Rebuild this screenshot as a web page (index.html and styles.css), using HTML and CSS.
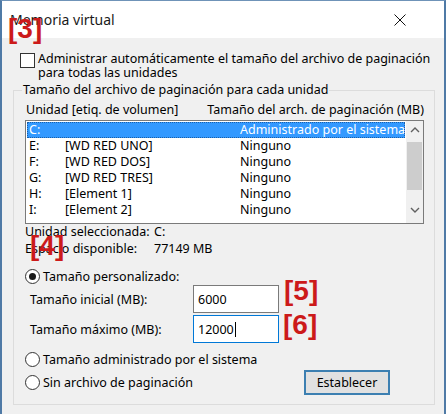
FILE: index.html
```html
<!DOCTYPE html>
<html lang="es">
    <head>
        <meta charset="UTF-8" />
        <title>Memoria virtual</title>
        <link rel="stylesheet" href="styles.css">
    </head>
    <body>
        <div class="window">
            <div class="titlebar">
                <span class="title">Memoria virtual</span>
                <svg class="close" width="12" height="12" viewBox="0 0 12 12">
                    <path d="M0.5 0.5 L11.5 11.5 M11.5 0.5 L0.5 11.5" stroke="#111" stroke-width="1" fill="none" />
                </svg>
            </div>

            <div class="content">
                <div class="check-row">
                    <span class="checkbox"></span>
                    <span class="check-text">Administrar automáticamente el tamaño del archivo de paginación<br>para todas las unidades</span>
                </div>

                <div class="group">
                    <div class="group-label">Tamaño del archivo de paginación para cada unidad</div>

                    <div class="list-head">
                        <span>Unidad [etiq. de volumen]</span>
                        <span>Tamaño del arch. de paginación (MB)</span>
                    </div>

                    <div class="listbox">
                        <div class="rows">
                            <div class="row selected">
                                <span class="col-drive">C:</span>
                                <span class="col-label"></span>
                                <span class="col-size">Administrado por el sistema</span>
                            </div>
                            <div class="row">
                                <span class="col-drive">E:</span>
                                <span class="col-label">[WD RED UNO]</span>
                                <span class="col-size">Ninguno</span>
                            </div>
                            <div class="row">
                                <span class="col-drive">F:</span>
                                <span class="col-label">[WD RED DOS]</span>
                                <span class="col-size">Ninguno</span>
                            </div>
                            <div class="row">
                                <span class="col-drive">G:</span>
                                <span class="col-label">[WD RED TRES]</span>
                                <span class="col-size">Ninguno</span>
                            </div>
                            <div class="row">
                                <span class="col-drive">H:</span>
                                <span class="col-label">[Element 1]</span>
                                <span class="col-size">Ninguno</span>
                            </div>
                            <div class="row">
                                <span class="col-drive">I:</span>
                                <span class="col-label">[Element 2]</span>
                                <span class="col-size">Ninguno</span>
                            </div>
                        </div>
                        <div class="scrollbar">
                            <svg class="arrow" width="10" height="6" viewBox="0 0 10 6">
                                <path d="M1 5 L5 1 L9 5" stroke="#606060" stroke-width="1.4" fill="none" />
                            </svg>
                            <div class="track"><div class="thumb"></div></div>
                            <svg class="arrow" width="10" height="6" viewBox="0 0 10 6">
                                <path d="M1 1 L5 5 L9 1" stroke="#606060" stroke-width="1.4" fill="none" />
                            </svg>
                        </div>
                    </div>

                    <div class="info">
                        <div class="info-row">
                            <span class="info-label">Unidad seleccionada:</span>
                            <span>C:</span>
                        </div>
                        <div class="info-row">
                            <span class="info-label">Espacio disponible:</span>
                            <span>77149 MB</span>
                        </div>
                    </div>

                    <div class="radio-row custom">
                        <span class="radio checked"></span>
                        <span>Tamaño personalizado:</span>
                    </div>

                    <div class="field-row">
                        <span class="field-label">Tamaño inicial (MB):</span>
                        <div class="input">6000</div>
                    </div>
                    <div class="field-row second">
                        <span class="field-label">Tamaño máximo (MB):</span>
                        <div class="input focused">12000<span class="caret"></span></div>
                    </div>

                    <div class="radio-row managed">
                        <span class="radio"></span>
                        <span>Tamaño administrado por el sistema</span>
                    </div>
                    <div class="bottom-row">
                        <div class="radio-row">
                            <span class="radio"></span>
                            <span>Sin archivo de paginación</span>
                        </div>
                        <button class="btn">Establecer</button>
                    </div>
                </div>
            </div>

            <span class="marker m3">[3]</span>
            <span class="marker m4">[4]</span>
            <span class="marker m5">[5]</span>
            <span class="marker m6">[6]</span>
        </div>
    </body>
</html>
```

FILE: styles.css
```css
* {
    margin: 0;
    padding: 0;
    box-sizing: border-box;
}

body {
    font-family: "Noto Sans", "Open Sans", sans-serif;
    font-size: 12.5px;
    color: #000;
    background: #fff;
    width: 448px;
    height: 414px;
    overflow: hidden;
}

.window {
    position: relative;
    width: 446px;
    height: 414px;
    border-top: 1px solid #6f93b8;
    border-left: 2px solid #4f7aa6;
    border-right: 2px solid #4f7aa6;
    background: #f0f0f0;
    display: flex;
    flex-direction: column;
}

.titlebar {
    height: 37px;
    background: #fff;
    display: flex;
    align-items: center;
    justify-content: space-between;
    padding: 0 38px 0 8px;
}

.title {
    font-size: 14px;
    color: #1a1a1a;
    margin-top: 0;
}

.close {
    margin-top: 1px;
}

.content {
    flex: 1;
    padding: 14px 9px 0 11px;
    display: flex;
    flex-direction: column;
}

.check-row {
    display: flex;
    align-items: flex-start;
    gap: 3px;
    line-height: 14px;
    padding-left: 7px;
}

.checkbox {
    width: 15px;
    height: 15px;
    border: 1px solid #333;
    background: #fff;
    margin-top: 1px;
}

.group {
    margin-top: 10px;
    border: 1px solid #dcdcdc;
    height: 315px;
    padding: 0 10px 0 11px;
    display: flex;
    flex-direction: column;
}

.group-label {
    margin-top: -8px;
    background: #f0f0f0;
    align-self: flex-start;
    padding: 0 1px;
    margin-left: -3px;
    line-height: 14px;
}

.list-head {
    display: flex;
    justify-content: space-between;
    margin-top: 5px;
    padding: 0 0 0 1px;
    line-height: 15px;
}

.listbox {
    margin-top: 3px;
    height: 104px;
    border: 1px solid #7a7a7a;
    background: #fff;
    display: flex;
}

.rows {
    flex: 1;
    padding: 1px 1px 0 1px;
}

.row {
    display: flex;
    height: 16px;
    line-height: 16px;
    white-space: nowrap;
}

.row.selected {
    background: #3399ff;
    color: #fff;
    outline: 1px dotted #1b5fa8;
    outline-offset: -1px;
}

.col-drive {
    width: 38px;
    padding-left: 2px;
}

.col-label {
    width: 175px;
}

.col-size {
    flex: 1;
}

.scrollbar {
    width: 20px;
    background: #f0f0f0;
    display: flex;
    flex-direction: column;
    align-items: center;
    padding: 6px 0 10px;
}

.arrow {
    flex: none;
}

.track {
    flex: 1;
    width: 100%;
    padding: 9px 1px 17px;
}

.thumb {
    height: 100%;
    background: #cdcdcd;
}

.info {
    margin-top: -1px;
    line-height: 17px;
}

.info-row {
    display: flex;
    white-space: nowrap;
}

.info-label {
    width: 129px;
}

.radio-row {
    display: flex;
    align-items: center;
    gap: 3px;
    height: 20px;
}

.radio-row.custom {
    margin-top: 10px;
    height: 18px;
}

.radio-row.managed {
    margin-top: 6px;
}

.radio {
    width: 15px;
    height: 15px;
    border: 1px solid #333;
    border-radius: 50%;
    background: #fff;
    position: relative;
}

.radio.checked::after {
    content: "";
    position: absolute;
    top: 3px;
    left: 3px;
    width: 7px;
    height: 7px;
    border-radius: 50%;
    background: #1a1a1a;
}

.field-row {
    display: flex;
    align-items: center;
    height: 28px;
    padding-left: 5px;
}

.field-row.second {
    margin-top: 2px;
}

.field-label {
    width: 163px;
}

.input {
    width: 86px;
    height: 28px;
    border: 1px solid #7a7a7a;
    background: #fff;
    padding-left: 4px;
    display: flex;
    align-items: center;
}

.input.focused {
    border-color: #0078d7;
}

.caret {
    width: 1px;
    height: 15px;
    background: #000;
    margin-left: 1px;
}

.bottom-row {
    display: flex;
    justify-content: space-between;
    align-items: center;
    height: 24px;
    margin-top: 1px;
    padding-right: 34px;
}

.btn {
    font-family: inherit;
    font-size: 12.5px;
    width: 86px;
    height: 25px;
    background: #e1e1e1;
    border: 2px solid #3c7fb1;
    color: #000;
}

.marker {
    position: absolute;
    font-family: "Liberation Sans", Arial, sans-serif;
    font-weight: bold;
    font-size: 28px;
    color: #cc1a1a;
    line-height: 28px;
}

.m3 {
    left: 6px;
    top: 14px;
}

.m4 {
    left: 28px;
    top: 231px;
}

.m5 {
    left: 282px;
    top: 276px;
}

.m6 {
    left: 281px;
    top: 310px;
}
```
